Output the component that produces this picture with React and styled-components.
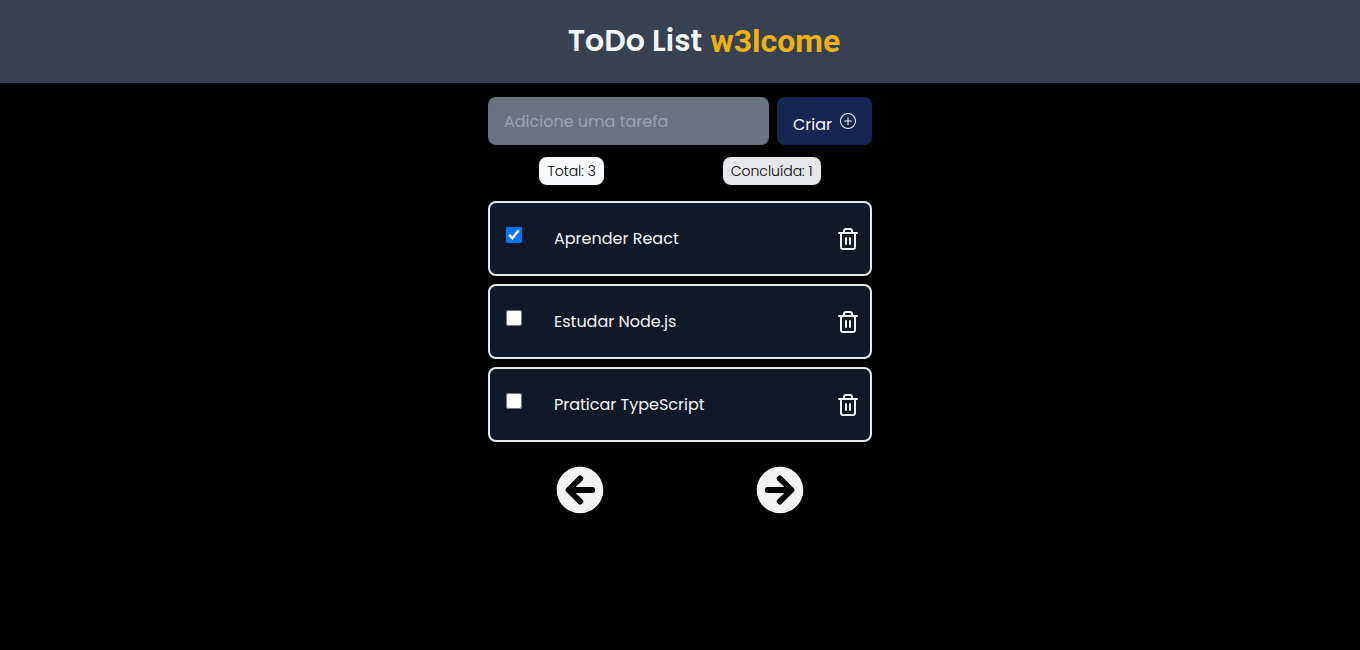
import React, { useState } from "react";
import styled, { createGlobalStyle } from "styled-components";
import { Trash2 } from "lucide-react";
import { BsPlusCircle } from "react-icons/bs";
import { FaArrowCircleLeft, FaArrowCircleRight } from "react-icons/fa";

const GlobalStyle = createGlobalStyle`
  *, *::before, *::after { box-sizing: border-box; }
  body {
    margin: 0;
    background: #000;
    color: #f3f4f6;
    font-family: Poppins, Inter, "Liberation Sans", sans-serif;
    font-size: 16px;
    line-height: 24px;
  }
  button, input { font: inherit; }
`;

const Header = styled.header`
  display: flex;
  align-items: center;
  justify-content: center;
  gap: 8px;
  min-height: 83px;
  padding: 0 0 2px 48px;
  background: #374151;
`;

const Title = styled.h1`
  margin: 0;
  font-size: 30px;
  font-weight: 600;
  line-height: 36px;
`;

const Brand = styled.span`
  color: #eeb111;
  font-family: Roboto, Inter, sans-serif;
  font-size: 32px;
  font-weight: 700;
  line-height: 36px;
`;

const Main = styled.main`
  width: 100%;
  max-width: 384px;
  margin: 0 auto;
  padding-top: 14px;
`;

const Form = styled.form`
  display: flex;
  gap: 8px;
`;

const TaskInput = styled.input`
  flex: 1;
  min-width: 0;
  height: 48px;
  padding: 0 16px;
  border: 0;
  border-radius: 8px;
  background: #6b7280;
  color: #f3f4f6;
  &::placeholder { color: #9ca3af; opacity: 1; }
`;

const CreateButton = styled.button`
  display: flex;
  align-items: flex-start;
  gap: 8px;
  height: 48px;
  padding: 16px;
  border: 0;
  border-radius: 8px;
  background: #172554;
  color: #f9fafb;
  cursor: pointer;
  svg { flex: none; width: 16px; height: 16px; }
`;

const Spread = styled.div`
  display: flex;
  justify-content: space-around;
  gap: 16px;
`;

const Counters = styled(Spread)`
  margin: 12px 0 16px;
`;

const Badge = styled.span`
  padding: 4px 8px;
  border-radius: 8px;
  background: ${(p) => (p.$muted ? "#e5e7eb" : "#f9fafb")};
  color: #000;
  font-size: 14px;
  font-weight: 300;
  line-height: 20px;
`;

const List = styled.ul`
  display: grid;
  gap: 8px;
  margin: 0;
  padding: 0;
  list-style: none;
`;

const Task = styled.li`
  display: flex;
  align-items: flex-start;
  padding: 24px 10px 23px 16px;
  border: 2px solid #e5e7eb;
  border-radius: 8px;
  background: #111827;
`;

const TaskLabel = styled.label`
  display: flex;
  flex: 1;
  gap: 32px;
`;

const Checkbox = styled.input`
  flex: none;
  width: 16px;
  height: 16px;
  margin: 0;
`;

const IconButton = styled.button`
  display: flex;
  padding: 0;
  border: 0;
  background: none;
  color: #f3f4f6;
  cursor: pointer;
`;

const Pager = styled(Spread)`
  margin-top: 24px;
`;

const initialTasks = [
  { id: 1, text: "Aprender React", done: true },
  { id: 2, text: "Estudar Node.js", done: false },
  { id: 3, text: "Praticar TypeScript", done: false },
];

export default function App() {
  const [tasks, setTasks] = useState(initialTasks);
  const [draft, setDraft] = useState("");

  const addTask = (event) => {
    event.preventDefault();
    if (!draft.trim()) return;
    setTasks([...tasks, { id: Date.now(), text: draft.trim(), done: false }]);
    setDraft("");
  };
  const toggle = (id) =>
    setTasks(tasks.map((t) => (t.id === id ? { ...t, done: !t.done } : t)));
  const remove = (id) => setTasks(tasks.filter((t) => t.id !== id));

  return (
    <>
      <GlobalStyle />
      <Header>
        <Title>ToDo List</Title>
        <Brand>w3lcome</Brand>
      </Header>
      <Main>
        <Form onSubmit={addTask}>
          <TaskInput
            aria-label="Adicione uma tarefa"
            placeholder="Adicione uma tarefa"
            value={draft}
            onChange={(e) => setDraft(e.target.value)}
          />
          <CreateButton type="submit">
            Criar <BsPlusCircle />
          </CreateButton>
        </Form>
        <Counters>
          <Badge>Total: {tasks.length}</Badge>
          <Badge $muted>Concluída: {tasks.filter((t) => t.done).length}</Badge>
        </Counters>
        <List>
          {tasks.map((task) => (
            <Task key={task.id}>
              <TaskLabel>
                <Checkbox
                  type="checkbox"
                  checked={task.done}
                  onChange={() => toggle(task.id)}
                />
                {task.text}
              </TaskLabel>
              <IconButton
                type="button"
                aria-label="Excluir tarefa"
                onClick={() => remove(task.id)}
              >
                <Trash2 size={24} />
              </IconButton>
            </Task>
          ))}
        </List>
        <Pager as="nav">
          <IconButton type="button" aria-label="Página anterior">
            <FaArrowCircleLeft size={48} />
          </IconButton>
          <IconButton type="button" aria-label="Próxima página">
            <FaArrowCircleRight size={48} />
          </IconButton>
        </Pager>
      </Main>
    </>
  );
}
